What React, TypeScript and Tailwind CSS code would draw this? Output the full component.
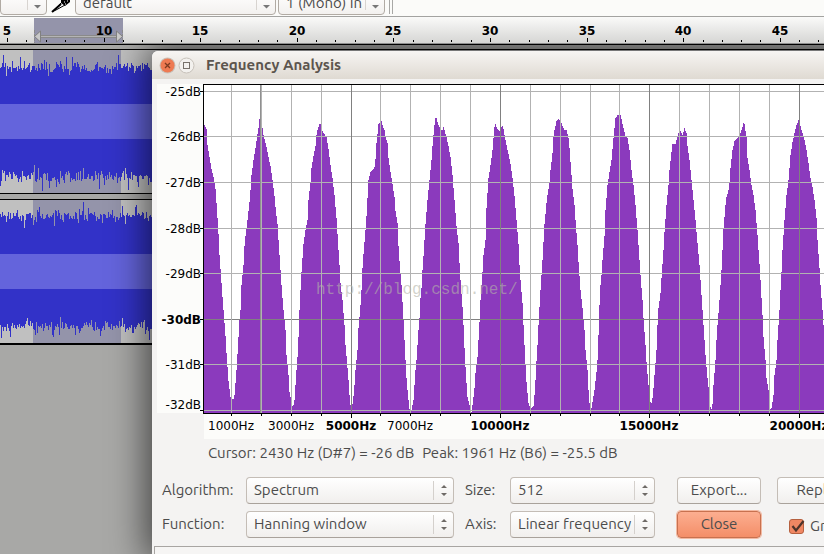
import { ReactNode, useState } from "react";

/* ---------- spectrum data: x, y pairs of the envelope ---------- */
const ENVELOPE: number[] = [
  204, 125, 206, 129, 207, 145, 209, 157, 211, 169, 213, 177, 215, 189, 216, 203, 217, 218, 218, 234, 219, 255, 220, 269,
  221, 283, 223, 310, 224, 323, 225, 336, 226, 353, 227, 367, 228, 381, 229, 389, 230, 397, 231, 399, 233, 399, 234, 395,
  235, 383, 236, 370, 237, 354, 238, 337, 239, 320, 240, 310, 241, 285, 243, 265, 244, 246, 245, 236, 247, 220, 249, 202,
  250, 190, 251, 175, 253, 160, 255, 148, 257, 134, 258, 128, 259, 119, 260, 119, 261, 122, 262, 128, 263, 135, 264, 139,
  266, 147, 268, 157, 270, 166, 272, 180, 274, 196, 275, 207, 277, 224, 278, 240, 279, 255, 281, 285, 283, 310, 285, 330,
  286, 355, 288, 375, 289, 392, 291, 402, 292, 406, 293, 405, 294, 400, 295, 385, 296, 370, 297, 357, 298, 337, 299, 310,
  300, 290, 301, 272, 302, 258, 303, 244, 305, 230, 307, 220, 308, 200, 310, 182, 311, 168, 313, 156, 315, 146, 316, 135,
  317, 130, 319, 124, 320, 124, 321, 127, 322, 131, 324, 134, 326, 137, 328, 149, 330, 165, 332, 178, 334, 195, 336, 218,
  338, 250, 339, 265, 340, 283, 342, 300, 344, 325, 345, 345, 346, 356, 348, 380, 349, 395, 350, 405, 351, 406, 352, 404,
  353, 396, 354, 385, 355, 370, 357, 350, 358, 328, 360, 305, 361, 290, 362, 268, 363, 254, 365, 230, 366, 216, 367, 198,
  368, 180, 370, 172, 372, 170, 374, 167, 375, 159, 376, 143, 377, 134, 378, 124, 380, 121, 381, 121, 382, 125, 384, 130,
  385, 137, 387, 143, 388, 158, 390, 172, 392, 184, 394, 197, 395, 211, 397, 223, 398, 246, 399, 261, 401, 285, 402, 302,
  403, 320, 404, 340, 405, 360, 406, 378, 407, 390, 408, 400, 409, 409, 410, 411, 411, 410, 413, 400, 414, 385, 415, 370,
  416, 360, 418, 330, 419, 318, 420, 298, 421, 288, 422, 270, 423, 256, 424, 240, 425, 224, 427, 200, 429, 180, 431, 160,
  432, 146, 433, 135, 434, 125, 435, 118, 436, 118, 437, 122, 439, 127, 440, 130, 442, 130, 443, 127, 444, 130, 446, 137,
  448, 146, 450, 157, 452, 175, 454, 200, 456, 226, 458, 243, 459, 263, 460, 280, 462, 307, 463, 325, 464, 348, 465, 367,
  466, 383, 467, 397, 469, 405, 470, 412, 471, 412, 472, 405, 474, 388, 475, 373, 477, 357, 478, 340, 479, 322, 480, 300,
  481, 285, 482, 272, 483, 255, 485, 240, 486, 208, 488, 178, 490, 165, 492, 150, 493, 138, 494, 127, 495, 124, 496, 127,
  498, 130, 500, 131, 501, 127, 502, 126, 503, 129, 504, 135, 506, 145, 508, 154, 510, 164, 512, 178, 514, 196, 516, 220,
  518, 244, 519, 265, 520, 280, 522, 303, 523, 325, 524, 345, 525, 365, 526, 382, 527, 393, 528, 403, 530, 408, 531, 408,
  533, 406, 534, 395, 535, 380, 536, 361, 537, 345, 538, 325, 539, 307, 540, 290, 541, 275, 542, 260, 544, 224, 546, 203,
  547, 195, 549, 182, 550, 170, 552, 153, 553, 137, 554, 130, 556, 121, 558, 119, 560, 120, 562, 126, 564, 130, 566, 130,
  568, 138, 569, 148, 571, 175, 572, 189, 574, 205, 575, 220, 577, 245, 578, 262, 580, 290, 582, 308, 584, 330, 585, 350,
  587, 370, 588, 390, 589, 403, 590, 408, 591, 408, 592, 402, 594, 390, 596, 372, 597, 360, 598, 335, 599, 305, 600, 285,
  601, 275, 602, 260, 604, 236, 605, 210, 607, 185, 609, 172, 611, 160, 613, 138, 614, 128, 615, 118, 617, 115, 620, 115,
  621, 119, 623, 128, 625, 136, 627, 138, 629, 150, 631, 170, 633, 185, 635, 205, 637, 230, 639, 260, 640, 275, 642, 300,
  643, 318, 645, 345, 646, 362, 648, 385, 649, 396, 650, 402, 651, 403, 652, 398, 653, 388, 654, 375, 656, 350, 657, 325,
  658, 308, 660, 293, 661, 278, 663, 250, 664, 232, 666, 205, 668, 185, 669, 170, 671, 152, 672, 144, 675, 144, 677, 136,
  678, 133, 680, 131, 682, 135, 684, 128, 686, 133, 687, 146, 689, 160, 691, 180, 693, 200, 695, 220, 697, 243, 699, 265,
  700, 280, 702, 310, 704, 340, 705, 355, 707, 378, 709, 395, 710, 407, 711, 409, 712, 404, 713, 385, 715, 360, 716, 340,
  717, 325, 719, 300, 720, 285, 721, 270, 722, 250, 723, 228, 725, 205, 726, 197, 728, 190, 729, 182, 730, 168, 732, 150,
  734, 141, 737, 138, 739, 135, 741, 130, 743, 123, 744, 124, 746, 137, 747, 158, 749, 170, 751, 185, 753, 195, 755, 210,
  757, 235, 759, 264, 760, 280, 762, 315, 763, 337, 765, 360, 766, 378, 768, 390, 769, 402, 770, 409, 771, 408, 773, 395,
  774, 375, 776, 360, 777, 340, 779, 310, 780, 290, 781, 272, 782, 250, 784, 220, 786, 195, 788, 180, 790, 155, 792, 142,
  794, 133, 796, 125, 798, 120, 799, 121, 801, 130, 804, 140, 806, 150, 808, 163, 810, 178, 812, 187, 814, 200, 816, 218,
  817, 240, 819, 268, 820, 285, 822, 310, 824, 340, 828, 395, 831, 406, 836, 370, 842, 270, 850, 170, 856, 125,
];

/* One-pixel columns, sampled from the envelope. */
function columnsPath(points: number[], bottom: number): string {
  let d = "";
  let i = 0;
  const last = points[points.length - 2];
  for (let x = points[0]; x < last; x++) {
    while (i + 2 < points.length && points[i + 2] <= x) i += 2;
    const span = points[i + 2] - points[i];
    const y = Math.round(points[i + 1] + ((points[i + 3] - points[i + 1]) * (x - points[i])) / span);
    d += `M${x} ${y}h1V${bottom}h-1z`;
  }
  return d;
}
const SPECTRUM = columnsPath(ENVELOPE, 413);

const DB_ROWS = [
  { y: 91, text: "-25dB", label: 96 },
  { y: 136, text: "-26dB", label: 141 },
  { y: 182, text: "-27dB", label: 187 },
  { y: 228, text: "-28dB", label: 233 },
  { y: 273, text: "-29dB", label: 278 },
  { y: 319, text: "-30dB", label: 324, major: true },
  { y: 364, text: "-31dB", label: 369 },
  { y: 410, text: "-32dB", label: 409 },
];
const HZ_LINES = Array.from({ length: 21 }, (_, i) => {
  const n = i + 1;
  return { n, x: Math.floor(201.7 + 29.87 * n), major: n % 5 === 0 };
});
const HZ_LABELS = [1, 3, 5, 7, 10, 15, 20];

function SpectrumChart() {
  return (
    <svg
      width="700"
      height="355"
      viewBox="157 84 700 355"
      shapeRendering="crispEdges"
      className="block max-w-none font-['DejaVu_Sans',sans-serif] text-[12px]"
      role="img"
      aria-label="Frequency spectrum"
    >
      <rect x="157" y="84" width="47" height="329" fill="#fcfcfa" />
      <rect x="204" y="414" width="660" height="25" fill="#fcfcfa" />
      <rect x="204" y="85" width="660" height="328" fill="#fff" />
      <path d={SPECTRUM} fill="#8b3abd" />
      {DB_ROWS.map((r) => (
        <rect key={r.y} x="204" y={r.y} width="660" height="1" fill={r.major ? "#808080" : "#b2b2b2"} />
      ))}
      {HZ_LINES.map((l) => (
        <rect key={l.n} x={l.x} y="85" width="1" height="328" fill={l.major ? "#808080" : "#b2b2b2"} />
      ))}
      <rect x="260" y="85" width="1" height="328" fill="#909090" />
      <rect x="203" y="84" width="660" height="1" fill="#000" />
      <rect x="203" y="84" width="1" height="330" fill="#000" />
      <rect x="203" y="413" width="660" height="1" fill="#000" />
      {DB_ROWS.map((r) => (
        <g key={r.text}>
          <rect x="200" y={r.y} width="3" height="1" fill="#000" />
          <text x="201" y={r.label} textAnchor="end" fontWeight={r.major ? 700 : 400}>
            {r.text}
          </text>
        </g>
      ))}
      {HZ_LINES.map((l) => (
        <rect key={l.n} x={l.x} y="414" width="1" height={l.major ? 4 : 2} fill="#000" />
      ))}
      {HZ_LABELS.map((n) => (
        <text
          key={n}
          x={Math.floor(201.7 + 29.87 * n)}
          y="430"
          textAnchor="middle"
          fontWeight={n % 5 === 0 ? 700 : 400}
        >
          {n * 1000}Hz
        </text>
      ))}
      <text x="316" y="294" fill="#b4b4a8" fillOpacity="0.6" className="font-['Liberation_Mono',monospace] text-[16px]">
        http://blog.csdn.net/
      </text>
    </svg>
  );
}

/* ---------- waveform tracks ---------- */
function noise(seed: number) {
  let s = seed;
  return () => {
    s = (s * 1103515245 + 12345) % 2147483648;
    return s / 2147483648;
  };
}

function wavePath(top: number, bottom: number, seed: number): string {
  const rnd = noise(seed);
  const edge = () => {
    const spike = rnd();
    const base = Math.round((rnd() + rnd() - 1) * 7);
    return spike > 0.92 ? base + 8 : spike < 0.08 ? base - 5 : base;
  };
  let d = "";
  for (let x = 0; x < 160; x++) d += `M${x} ${top - edge()}h1V${bottom + edge()}h-1z`;
  return d;
}
const TRACKS = [
  { top: 17, bottom: 127, rms: 54, seed: 7, height: 143 },
  { top: 16, bottom: 127, rms: 54, seed: 4242, height: 143 },
];

function Wave({ track }: { track: (typeof TRACKS)[number] }) {
  return (
    <svg width="160" height={track.height} shapeRendering="crispEdges" className="block" aria-hidden="true">
      <rect x="33" width="88" height={track.height} fill="#9494aa" />
      <path d={wavePath(track.top, track.bottom, track.seed)} fill="#3232c8" />
      <rect y={track.rms} width="160" height="35" fill="#6464dc" />
    </svg>
  );
}

/* ---------- ruler ---------- */
function Ruler() {
  const seconds = Array.from({ length: 43 }, (_, i) => i + 5);
  return (
    <svg
      width="100%"
      height="26"
      shapeRendering="crispEdges"
      className="block font-['DejaVu_Sans',sans-serif] text-[12px] font-bold"
      role="img"
      aria-label="Timeline"
    >
      <rect x="34" y="1" width="89" height="25" fill="#9494aa" />
      <path d="M37 18.500h80M37 20.500h80" stroke="#8a8a8a" />
      <path d="M37 19.500h80" stroke="#b4b4b4" />
      <path d="M34.500 13v13M122.500 13v13" stroke="#8a8a8a" strokeDasharray="3 1" />
      <g shapeRendering="auto" fill="#c8c8c8" stroke="#808080">
        <path d="M40.500 14v11l-6-5.500z" />
        <path d="M116.500 14v11l6-5.500z" />
      </g>
      {seconds.map((n) => {
        const major = n % 5 === 0;
        const x = Math.round(7 + 19.32 * (n - 5));
        return (
          <g key={n}>
            <rect x={x} y={major ? 21 : 23} width="1" height={major ? 4 : 2} fill="#000" />
            {major && (
              <text x={x} y="18" textAnchor="middle">
                {n}
              </text>
            )}
          </g>
        );
      })}
    </svg>
  );
}

/* ---------- controls ---------- */
function ToolbarSelect({ label, text, width }: { label: string; text: string; width: string }) {
  return (
    <div className={`relative h-6 shrink-0 ${width}`}>
      <select
        aria-label={label}
        className="h-full w-full appearance-none rounded border border-[#b1aba4] bg-linear-to-b from-white to-[#f3f1ef] pl-[7px] text-[15px] text-[#4c4c4c]"
      >
        <option>{text}</option>
      </select>
      <span className="pointer-events-none absolute inset-y-1 right-0 flex w-5 items-center justify-center border-l border-[#d8d4d0]">
        <svg width="7" height="14" aria-hidden="true">
          <path d="M0 10h7l-3.500 3.500z" fill="#777" />
        </svg>
      </span>
    </div>
  );
}

function DialogSelect({ id, text }: { id: string; text: string }) {
  return (
    <div className="relative h-[27px]">
      <select
        id={id}
        className="h-full w-full appearance-none rounded border border-[#c4bdb6] border-b-[#a9a29b] bg-linear-to-b from-white to-[#f1efed] pl-[7px]"
      >
        <option>{text}</option>
      </select>
      <span className="pointer-events-none absolute inset-y-1 right-0 flex w-[21px] items-center justify-center border-l border-[#d4d0cc]">
        <svg width="6" height="13" aria-hidden="true">
          <path d="M0 4h6L3 1zM0 9h6l-3 3z" fill="#6e6a66" />
        </svg>
      </span>
    </div>
  );
}

function PlainButton({ children }: { children: ReactNode }) {
  return (
    <button
      type="button"
      className="h-[27px] w-[84px] rounded border border-[#c4bdb6] border-b-[#a9a29b] bg-linear-to-b from-white to-[#f1efed]"
    >
      {children}
    </button>
  );
}

function AnalysisDialog() {
  const [grids, setGrids] = useState(true);
  return (
    <section
      aria-label="Frequency Analysis"
      className="absolute top-[51px] bottom-0 left-[152px] w-[720px] overflow-hidden rounded-tl-md bg-[#f4f3f2] text-[15px] text-[#4c4c4c] shadow-[0_0_36px_6px_rgba(0,0,0,0.6)]"
    >
      <header className="flex h-[28px] items-center bg-linear-to-b from-[#f7f5f3] to-[#dfdad2] pl-[7px]">
        <button type="button" aria-label="Close window" className="mr-0.5">
          <svg width="17" height="17" className="block" aria-hidden="true">
            <circle cx="8.5" cy="8.5" r="8" fill="#c9c2ba" />
            <circle cx="8.5" cy="8.5" r="7" fill="#ee7a52" />
            <path d="M6 6l5 5M11 6l-5 5" stroke="#7c3a20" strokeWidth="1.3" />
          </svg>
        </button>
        <button type="button" aria-label="Maximize window">
          <svg width="17" height="17" className="block" aria-hidden="true">
            <circle cx="8.5" cy="8.5" r="7.5" fill="#f3f1ee" stroke="#c6c0b9" />
            <rect x="5.500" y="5.500" width="6" height="6" fill="none" stroke="#77716a" />
          </svg>
        </button>
        <h1 className="pl-[11px] font-bold text-[#5c554e]">Frequency Analysis</h1>
      </header>

      <div className="pt-[5px] pl-[5px]">
        <SpectrumChart />
      </div>

      <p className="flex h-7 items-center gap-2 pl-14">
        <span>Cursor: 2430 Hz (D#7) = -26 dB</span>
        <span>Peak: 1961 Hz (B6) = -25.5 dB</span>
      </p>

      <form className="grid grid-cols-[84px_208px_56px_145px_122px_84px] items-center gap-y-[7px] pt-[10px] pl-[10px]">
        <label htmlFor="algorithm">Algorithm:</label>
        <DialogSelect id="algorithm" text="Spectrum" />
        <label htmlFor="size" className="pl-[11px]">
          Size:
        </label>
        <DialogSelect id="size" text="512" />
        <div className="pl-[22px]">
          <PlainButton>Export...</PlainButton>
        </div>
        <PlainButton>Replot</PlainButton>

        <label htmlFor="function">Function:</label>
        <DialogSelect id="function" text="Hanning window" />
        <label htmlFor="axis" className="pl-[11px]">
          Axis:
        </label>
        <DialogSelect id="axis" text="Linear frequency" />
        <div className="pl-[22px]">
          <button
            type="button"
            className="h-[27px] w-[84px] rounded border border-[#c8714f] bg-linear-to-b from-[#fcae90] to-[#f48e68] ring-1 ring-[#f3b9a2]"
          >
            Close
          </button>
        </div>
        <label className="flex h-[27px] items-center gap-[6px] pt-1 pl-3">
          <span className="relative block size-[15px]">
            <input
              type="checkbox"
              checked={grids}
              onChange={(e) => setGrids(e.target.checked)}
              className="block size-[15px] appearance-none rounded-[3px] border border-[#b5603f] bg-[#f08763]"
            />
            {grids && (
              <svg width="17" height="15" className="pointer-events-none absolute top-0 left-0" aria-hidden="true">
                <path d="M3.500 7l3.500 4.500L14.500 2" fill="none" stroke="#4e342a" strokeWidth="2.2" />
              </svg>
            )}
          </span>
          Grids
        </label>
      </form>

      <div className="mt-2 ml-0.5 h-6 border border-[#a8a5a2] bg-[#f6f5f4]" />
    </section>
  );
}

export default function App() {
  return (
    <main className="relative flex h-screen flex-col overflow-hidden bg-[#a8a8a6] font-[Ubuntu,'Noto_Sans',sans-serif]">
      <div className="relative z-10 flex h-[17px] shrink-0 items-end overflow-hidden border-b border-[#a3a3a1] bg-[#fbfbf9] pb-0.5">
        <ToolbarSelect label="Host" text="" width="w-[47px]" />
        <svg width="28" height="14" className="shrink-0" aria-hidden="true">
          <path d="M5.500 11.500L15 2l3 3-9 5z" fill="#fff" stroke="#000" />
          <path d="M5 12l9-8" stroke="#000" strokeWidth="2" />
          <path d="M14 0h9v2l-5 4-4-3z" fill="#000" />
          <path d="M17 2h1M20 1h1M18 4h1" stroke="#fff" />
        </svg>
        <ToolbarSelect label="Recording device" text="default" width="w-[201px]" />
        <span className="w-0.5 shrink-0" />
        <ToolbarSelect label="Recording channels" text="1 (Mono) In" width="w-[107px]" />
        <span className="ml-1 h-[30px] w-1 shrink-0 border-x border-[#a8a8a6]" />
      </div>
      <div className="relative z-10 shrink-0 border-b border-[#8e8e8e] bg-linear-to-b from-[#fafaf9] to-[#d6d6d4]">
        <Ruler />
      </div>
      <div className="h-[6px] shrink-0 border-y border-black bg-[#a8a8a6]" />
      <div className="shrink-0 border-b border-black bg-[#c0c0c0]">
        <Wave track={TRACKS[0]} />
      </div>
      <div className="h-[6px] shrink-0 border-b border-black" />
      <div className="shrink-0 border-b-2 border-black bg-[#c0c0c0]">
        <Wave track={TRACKS[1]} />
      </div>
      <AnalysisDialog />
    </main>
  );
}
